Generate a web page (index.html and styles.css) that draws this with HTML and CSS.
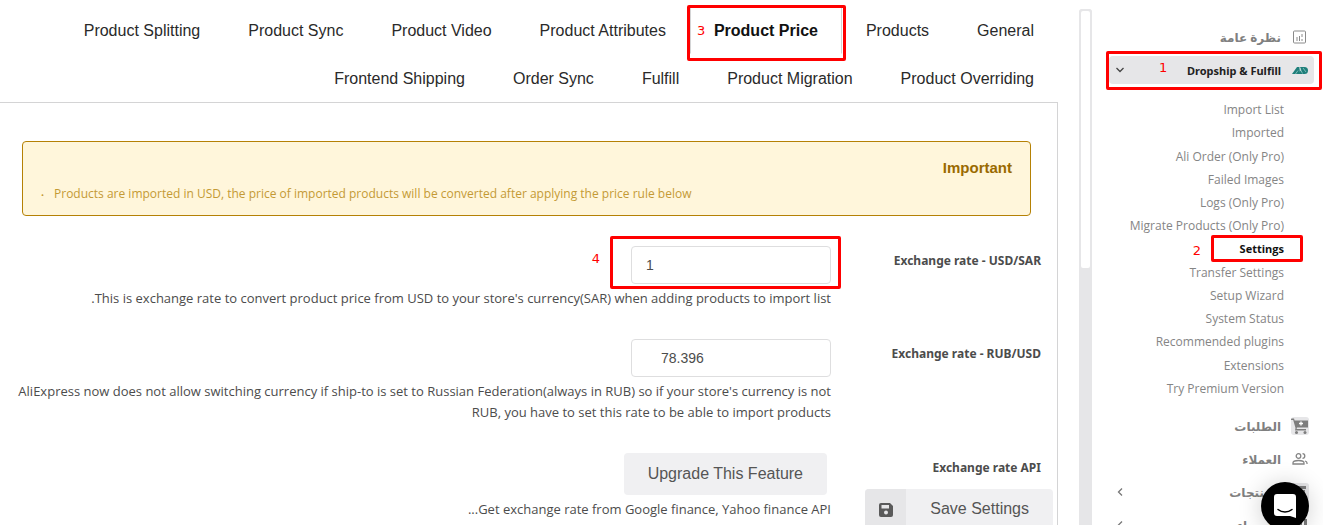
FILE: index.html
```
<!DOCTYPE html>
<html dir="rtl" lang="ar">
<head>
	<meta charset="utf-8">
	<title>Dropship &amp; Fulfill - Settings</title>
	<link rel="stylesheet" href="styles.css">
</head>
<body>

<!-- SIDEBAR -->
<aside class="sidebar">
	<ul class="menu">
		<li><a href="#overview">
			<svg class="icon" viewBox="0 0 16 16" fill="none" stroke="#8a8a8a"><rect x="1.500" y="2" width="12" height="12" rx="1"/><path d="M5 8v4M7.500 7v5M10 5v3M10 10v2"/></svg>
			<span>نظرة عامة</span></a></li>
		<li class="open"><a href="#dropship">
			<svg class="icon" viewBox="0 0 16 16"><path d="M0 12L5 5h2.500l.5 7z" fill="#1f7f7b"/><path d="M8 5h4.500a3.500 3.500 0 0 1 0 7H11z" fill="#1f7f7b"/><path d="M6 12l4-5 3 5" fill="#1f7f7b"/><path d="M3.500 12L6 8.500M7.500 5.500l3 6M11 6l3 4" stroke="#a5d5d1" stroke-width=".7" fill="none"/></svg>
			<span>Dropship &amp; Fulfill</span>
			<svg class="arrow" viewBox="0 0 10 10" fill="none" stroke="#444" stroke-width="1.300"><path d="M1.500 3L5 6.500 8.500 3"/></svg></a>
			<span class="mark mark-menu"></span><span class="num num-menu">1</span>
		</li>
	</ul>
	<ul class="submenu">
		<li><a href="#import">Import List</a></li>
		<li><a href="#imported">Imported</a></li>
		<li><a href="#order">Ali Order (Only Pro)</a></li>
		<li><a href="#failed">Failed Images</a></li>
		<li><a href="#logs">Logs (Only Pro)</a></li>
		<li><a href="#migrate">Migrate Products (Only Pro)</a></li>
		<li class="current"><a href="#settings">Settings</a><span class="mark mark-settings"></span><span class="num num-settings">2</span></li>
		<li><a href="#transfer">Transfer Settings</a></li>
		<li><a href="#wizard">Setup Wizard</a></li>
		<li><a href="#status">System Status</a></li>
		<li><a href="#plugins">Recommended plugins</a></li>
		<li><a href="#extensions">Extensions</a></li>
		<li><a href="#premium">Try Premium Version</a></li>
	</ul>
	<ul class="menu">
		<li><a href="#orders">
			<svg class="icon icon-box" viewBox="0 0 18 18" fill="#7d7d7d"><path d="M0 1.500h3l.6 2H17v7H6l-.4 1.500H15v1.500H4L4.500 11 2.200 3H0z"/><circle cx="5.500" cy="15.500" r="1.500"/><circle cx="14" cy="15.500" r="1.500"/><path d="M10 4.500v4M8 6.500h4" stroke="#fff" stroke-width="1.300"/></svg>
			<span>الطلبات</span></a></li>
		<li><a href="#customers">
			<svg class="icon" viewBox="0 0 16 16" fill="none" stroke="#858585" stroke-width="1.300"><circle cx="6.500" cy="5" r="2.300"/><path d="M1 13v-1.200C1 10 4 9.500 6.500 9.500s5.500.5 5.500 2.300V13zM10.500 2.700a2.300 2.300 0 0 1 0 4.600M13 10c1.500.5 2 1 2 2v1"/></svg>
			<span>العملاء</span></a></li>
		<li><a href="#products">
			<svg class="icon icon-box" viewBox="0 0 18 18" fill="#7d7d7d"><path d="M3 3h12v3H3zM4 7h10v8H4z"/></svg>
			<span>المنتجات</span>
			<svg class="arrow" viewBox="0 0 10 10" fill="none" stroke="#777" stroke-width="1.300"><path d="M7 1.500L3.500 5 7 8.500"/></svg></a></li>
		<li><a href="#stats">
			<svg class="icon" viewBox="0 0 16 16" fill="#7d7d7d"><path d="M2 8h3v6H2zM7 5h3v9H7zM12 2h3v12h-3z"/></svg>
			<span>الإحصاء</span>
			<svg class="arrow" viewBox="0 0 10 10" fill="none" stroke="#777" stroke-width="1.300"><path d="M7 1.500L3.500 5 7 8.500"/></svg></a></li>
	</ul>
</aside>

<div class="scroll"><div class="thumb"></div></div>

<!-- SETTINGS -->
<main class="content">
	<nav class="tabs">
		<a href="#general">General</a>
		<a href="#tab-products">Products</a>
		<a href="#price" class="active">Product Price<span class="mark mark-tab"></span><span class="num num-tab">3</span></a>
		<a href="#attributes">Product Attributes</a>
		<a href="#video">Product Video</a>
		<a href="#sync">Product Sync</a>
		<a href="#splitting">Product Splitting</a>
		<a href="#overriding">Product Overriding</a>
		<a href="#migration">Product Migration</a>
		<a href="#fulfill">Fulfill</a>
		<a href="#order-sync">Order Sync</a>
		<a href="#shipping">Frontend Shipping</a>
	</nav>
	<form class="panel" id="price-form">
		<div class="message">
			<h2>Important</h2>
			<ul dir="ltr">
				<li>Products are imported in USD, the price of imported products will be converted after applying the price rule below</li>
			</ul>
		</div>
		<div class="row">
			<label for="usd">Exchange rate - USD/SAR</label>
			<div class="field">
				<input id="usd" class="rate" type="text" dir="ltr" value="1">
				<p>This is exchange rate to convert product price from USD to your store's currency(SAR) when adding products to import list.</p>
				<span class="mark mark-rate"></span><span class="num num-rate">4</span>
			</div>
		</div>
		<div class="row">
			<label for="rub">Exchange rate - RUB/USD</label>
			<div class="field">
				<input id="rub" class="rate rate-wide" type="text" dir="ltr" value="78.396">
				<p>AliExpress now does not allow switching currency if ship-to is set to Russian Federation(always in RUB) so if your store's currency is not RUB, you have to set this rate to be able to import products</p>
			</div>
		</div>
		<div class="row">
			<label for="upgrade">Exchange rate API</label>
			<div class="field">
				<button id="upgrade" class="button" type="button">Upgrade This Feature</button>
				<p>Get exchange rate from Google finance, Yahoo finance API...</p>
			</div>
		</div>
	</form>
	<button class="button save" type="submit" form="price-form" dir="ltr">
		<span class="save-icon"><svg viewBox="0 0 14 14" width="14" height="14"><path d="M2 0h9l3 3v9a2 2 0 0 1-2 2H2a2 2 0 0 1-2-2V2a2 2 0 0 1 2-2z" fill="#5a5a5a"/><path d="M2.500 2h7.500v3.500H2.500z" fill="#e6e6e8"/><circle cx="7" cy="9.500" r="2" fill="#e6e6e8"/></svg></span>
		<span class="save-text">Save Settings</span>
	</button>
</main>

<button class="chat" type="button" aria-label="Chat">
	<svg viewBox="0 0 24 26" width="24" height="26"><path d="M4 1h16a3 3 0 0 1 3 3v21l-6-2H4a3 3 0 0 1-3-3V4a3 3 0 0 1 3-3z" fill="#fff"/><path d="M5 16.500c4 3.300 10 3.300 14 0" fill="none" stroke="#000" stroke-width="1.500" stroke-linecap="round"/></svg>
</button>

</body>
</html>
```
FILE: styles.css
```
* {
    box-sizing: border-box;
}
body {
    display: flex;
    height: 100vh;
    margin: 0;
    overflow: hidden;
    background: #fff;
    color: #4c4c4c;
    font-family: "Open Sans", "DejaVu Sans", sans-serif;
    font-size: 13px;
}
ul {
    margin: 0;
    padding: 0;
    list-style: none;
}
a {
    color: inherit;
    text-decoration: none;
}

/* sidebar */
.sidebar {
    flex: 0 0 231px;
    padding: 21px 9px 0 17px;
}
.menu li {
    position: relative;
    height: 33px;
    padding: 2px 0 3px;
}
.menu a {
    display: flex;
    align-items: center;
    gap: 10px;
    height: 28px;
    padding: 0 5px 0 6px;
    border-radius: 4px;
    color: #808080;
    font: bold 12px "Noto Sans", "DejaVu Sans", sans-serif;
}
.menu .open a {
    background: #e6e6e8;
    color: #222;
    font-size: 11px;
}
.icon {
    flex: none;
    width: 18px;
    height: 16px;
}
.icon-box {
    height: 18px;
    border-radius: 3px;
    background: #e6e6e8;
}
.arrow {
    width: 10px;
    height: 10px;
    margin-right: auto;
}
.submenu {
    display: grid;
    grid-auto-rows: 1fr;
    height: 302px;
    margin: 11px 0 10px;
    padding-right: 30px;
    color: #858585;
    font-size: 12px;
}
.submenu li {
    position: relative;
    display: flex;
    align-items: center;
}
.submenu .current {
    color: #111;
    font-size: 11px;
    font-weight: bold;
}
.scroll {
    flex: 0 0 13px;
    margin-top: 9px;
    border-radius: 3px 3px 0 0;
    background: #e6e6e8;
}
.thumb {
    height: 261px;
    border: 2px solid #e6e6e8;
    border-radius: 4px;
    background: #fff;
}

/* tabs */
.content {
    position: relative;
    display: flex;
    flex: 1;
    flex-direction: column;
    padding: 6px 21px 0 0;
}
.tabs {
    display: flex;
    flex-wrap: wrap;
}
.tabs a {
    position: relative;
    height: 48px;
    padding: 0 23px;
    border: 1px solid transparent;
    color: #2a2a2a;
    font: 16px/48px "Liberation Sans", Arial, sans-serif;
}
.tabs .active {
    border-color: #d4d4d5;
    border-bottom-color: transparent;
    color: #111;
    font-weight: bold;
}

/* settings form */
.panel {
    flex: 1;
    padding: 38px 26px 0 6px;
    border: 1px solid #d4d4d5;
    border-width: 1px 1px 0 0;
}
.message {
    height: 75px;
    margin: 0 0 30px 16px;
    padding: 16px 18px;
    border: 1px solid #b58105;
    border-radius: 4px;
    background: #fff6db;
    color: #c49a35;
    font-size: 12px;
}
.message h2 {
    margin: 0;
    color: #9a6a00;
    font: bold 15px/20px "Liberation Sans", Arial, sans-serif;
}
.message li {
    line-height: 32px;
}
.message li::before {
    content: "•";
    padding-right: 10px;
    font-size: 8px;
}
.row {
    display: flex;
    gap: 34px;
    margin: 0 -10px 30px 0;
}
.row label {
    flex: 0 0 176px;
    font: bold 12px/30px "Noto Sans", "DejaVu Sans", sans-serif;
}
.field {
    position: relative;
    flex: 1;
}
.field p {
    margin: 4px 0 0;
    line-height: 21px;
}
.rate {
    display: block;
    width: 200px;
    height: 38px;
    padding: 0 14px;
    border: 1px solid #dededf;
    border-radius: 4px;
    background: #fff;
    color: #4c4c4c;
    font: 14px "Liberation Sans", Arial, sans-serif;
}
.rate-wide {
    padding: 0 29px;
}
.button {
    display: block;
    height: 42px;
    margin-right: 4px;
    padding: 0 24px;
    border: 0;
    border-radius: 4px;
    background: #f0f0f2;
    color: #555;
    font: 16px "Liberation Sans", Arial, sans-serif;
}
.save {
    position: absolute;
    right: 26px;
    bottom: -6px;
    display: flex;
    margin: 0;
    padding: 0;
    overflow: hidden;
    line-height: 40px;
}
.save-icon {
    display: flex;
    align-items: center;
    justify-content: center;
    width: 41px;
    height: 42px;
    background: #e6e6e8;
}
.save-text {
    padding: 0 24px;
}
.chat {
    position: fixed;
    right: 14px;
    bottom: -5px;
    display: flex;
    align-items: center;
    justify-content: center;
    width: 48px;
    height: 48px;
    padding: 0;
    border: 0;
    border-radius: 50%;
    background: #000;
    box-shadow: 0 2px 24px rgba(0, 0, 0, 0.2);
}

/* red step marks */
.mark {
    position: absolute;
    border: 3px solid #f00;
    border-radius: 2px;
}
.num {
    position: absolute;
    color: #f00;
    font: 13px/14px "DejaVu Sans", sans-serif;
}
.mark-menu {
    inset: -3px -8px -3px -3px;
}
.num-menu {
    left: 50px;
    top: 7px;
}
.mark-settings {
    top: -2px;
    right: -19px;
    width: 92px;
    height: 27px;
}
.num-settings {
    right: 83px;
    top: 7px;
}
.mark-tab {
    inset: -2px -5px -8px -4px;
}
.num-tab {
    left: 6px;
    top: 17px;
}
.mark-rate {
    top: -10px;
    right: -10px;
    width: 231px;
    height: 53px;
}
.num-rate {
    top: 6px;
    right: 231px;
}
```
